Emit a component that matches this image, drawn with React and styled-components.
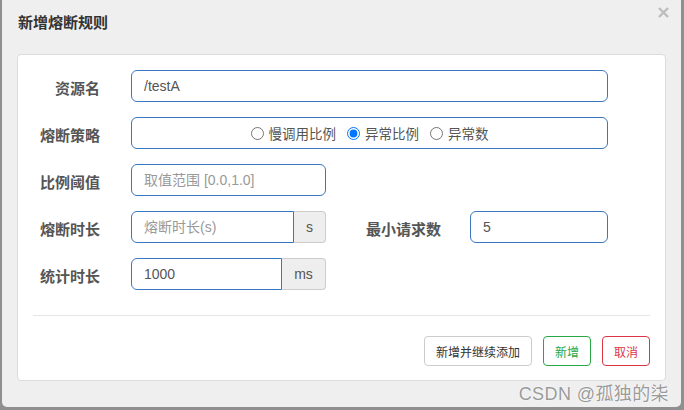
import styled, { createGlobalStyle } from 'styled-components';

const GlobalStyle = createGlobalStyle`
  html, body {
    margin: 0;
    padding: 0;
    background: #8f8f8f;
  }
  body {
    font-family: "Liberation Sans", "Noto Sans CJK SC", sans-serif;
    width: 684px;
    height: 410px;
    overflow: hidden;
  }
`;

const Dialog = styled.div`
  position: relative;
  margin-left: 2px;
  width: 679px;
  height: 407px;
  box-sizing: border-box;
  background: #efefef;
  border-radius: 0 0 5px 5px;
  padding: 0 15px 0 15px;
  display: flex;
  flex-direction: column;
`;

const Title = styled.h4`
  margin: 0;
  padding: 14px 0 0 1px;
  height: 16px;
  line-height: 16px;
  font-size: 15px;
  font-weight: bold;
  color: #333;
  font-family: "Noto Sans CJK SC", sans-serif;
`;

const Close = styled.button`
  position: absolute;
  top: 7px;
  right: 12px;
  width: 11px;
  height: 11px;
  padding: 0;
  border: 0;
  background: none;
  cursor: pointer;
  display: flex;
`;

const Panel = styled.div`
  margin-top: 24px;
  width: 649px;
  height: 327px;
  box-sizing: border-box;
  background: #fff;
  border: 1px solid #dcdcdc;
  border-radius: 4px;
  padding: 15px 15px 0 15px;
  display: flex;
  flex-direction: column;
`;

const Row = styled.div`
  display: flex;
  align-items: center;
  height: 32px;
  margin-bottom: 15px;
`;

const Label = styled.label`
  width: ${p => p.width || 67}px;
  margin-right: ${p => p.gap || 31}px;
  text-align: right;
  font-size: 15px;
  font-weight: bold;
  color: #555;
  font-family: "Noto Sans CJK SC", sans-serif;
  white-space: nowrap;
  padding-top: 2px;
`;

const Input = styled.input`
  box-sizing: border-box;
  width: ${p => p.width}px;
  height: 32px;
  padding: 0 12px;
  border: 1px solid #3a78bd;
  border-radius: ${p => (p.grouped ? '6px 0 0 6px' : '6px')};
  font-size: 14px;
  color: #555;
  font-family: "Liberation Sans", "Noto Sans CJK SC", sans-serif;
  outline: none;
  background: #fff;

  &::placeholder {
    color: #999;
  }
`;

const Group = styled.div`
  display: flex;
  height: 32px;
`;

const Addon = styled.span`
  box-sizing: border-box;
  width: ${p => p.width}px;
  height: 32px;
  display: flex;
  align-items: center;
  justify-content: center;
  background: #eee;
  border: 1px solid #ccc;
  border-left: 0;
  border-radius: 0 4px 4px 0;
  font-size: 14px;
  color: #555;
`;

const RadioBox = styled.div`
  box-sizing: border-box;
  width: 477px;
  height: 32px;
  border: 1px solid #3a78bd;
  border-radius: 6px;
  display: flex;
  align-items: center;
  justify-content: center;
  gap: 11px;
  font-family: "Noto Sans CJK SC", sans-serif;
`;

const RadioLabel = styled.label`
  display: flex;
  align-items: center;
  font-size: 13.5px;
  color: #555;
  gap: 5px;

  input {
    margin: 0;
    width: 13px;
    height: 13px;
    accent-color: #0075ff;
  }
`;

const Divider = styled.hr`
  margin: 10px 0 20px 0;
  border: 0;
  border-top: 1px solid #e5e5e5;
`;

const Footer = styled.div`
  display: flex;
  justify-content: flex-end;
  gap: 11px;
`;

const Button = styled.button`
  height: 30px;
  padding: 0 11px;
  background: #fff;
  border: 1px solid ${p => p.color || '#ccc'};
  color: ${p => p.color || '#333'};
  border-radius: 4px;
  font-size: 12px;
  font-family: "Noto Sans CJK SC", sans-serif;
  cursor: pointer;
`;

const Watermark = styled.div`
  position: absolute;
  right: 12px;
  bottom: 2px;
  font-size: 18px;
  letter-spacing: 0.4px;
  color: #9a9a9a;
  text-shadow: 0 0 2px #fff, 0 0 1px #fff;
  font-family: "Liberation Sans", "Noto Sans CJK SC", sans-serif;
  pointer-events: none;
`;

const App = () => (
  <>
    <GlobalStyle />
    <Dialog>
      <Title>新增熔断规则</Title>
      <Close aria-label="close">
        <svg width="11" height="11" viewBox="0 0 11 11">
          <path d="M1 1 L10 10 M10 1 L1 10" stroke="#bdbdbd" strokeWidth="2.4" />
        </svg>
      </Close>
      <Panel>
        <Row>
          <Label>资源名</Label>
          <Input width={477} defaultValue="/testA" />
        </Row>
        <Row>
          <Label>熔断策略</Label>
          <RadioBox>
            <RadioLabel><input type="radio" name="grade" />慢调用比例</RadioLabel>
            <RadioLabel><input type="radio" name="grade" defaultChecked />异常比例</RadioLabel>
            <RadioLabel><input type="radio" name="grade" />异常数</RadioLabel>
          </RadioBox>
        </Row>
        <Row>
          <Label>比例阈值</Label>
          <Input width={195} placeholder="取值范围 [0.0,1.0]" />
        </Row>
        <Row>
          <Label>熔断时长</Label>
          <Group>
            <Input width={163} grouped placeholder="熔断时长(s)" />
            <Addon width={32}>s</Addon>
          </Group>
          <Label width={115} gap={29}>最小请求数</Label>
          <Input width={138} defaultValue="5" />
        </Row>
        <Row>
          <Label>统计时长</Label>
          <Group>
            <Input width={151} grouped defaultValue="1000" />
            <Addon width={44}>ms</Addon>
          </Group>
        </Row>
        <Divider />
        <Footer>
          <Button>新增并继续添加</Button>
          <Button color="#28a745">新增</Button>
          <Button color="#dc3545">取消</Button>
        </Footer>
      </Panel>
      <Watermark>CSDN @孤独的柒</Watermark>
    </Dialog>
  </>
);

export default App;
